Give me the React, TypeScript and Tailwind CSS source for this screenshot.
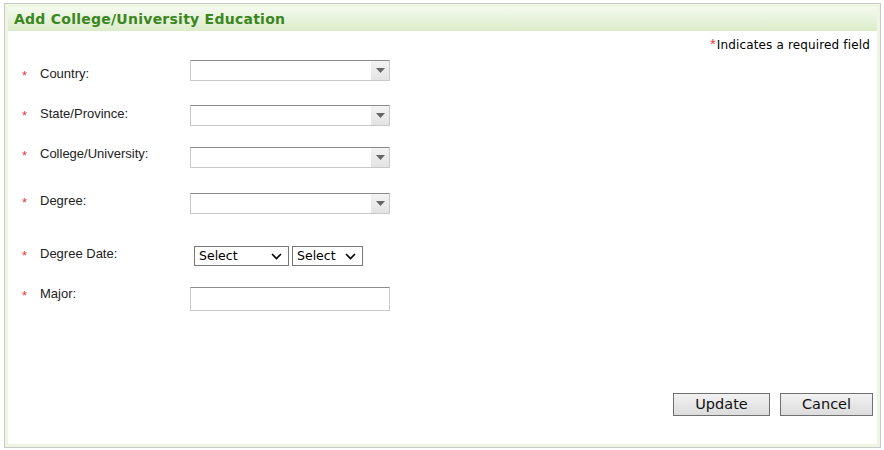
import React from "react";

const Star = () => (
  <span className="w-[18px] ml-[14px] text-[#e8383d] text-[13px] leading-none font-['Liberation_Sans',sans-serif] pt-[3px]">*</span>
);

const Combo = () => (
  <div className="flex w-[200px] h-[21px] border border-[#c9c9c9] border-t-[#8c8c8c] bg-white">
    <div className="flex-1" />
    <div className="w-[18px] h-full bg-gradient-to-b from-[#f3f3f3] to-[#e3e3e3] flex items-center justify-center">
      <svg width="9" height="5" viewBox="0 0 9 5"><path d="M0 0H9L4.5 5Z" fill="#666" /></svg>
    </div>
  </div>
);

const SmallSelect = ({ w }: { w: string }) => (
  <div className={`flex items-center ${w} h-[20px] border border-[#767676] bg-white pl-[4px] pr-[6px] font-['DejaVu_Sans',sans-serif] text-[12.5px] text-black`}>
    <span className="flex-1 leading-none">Select</span>
    <svg width="11" height="7" viewBox="0 0 11 7"><path d="M1 1L5.5 5.5L10 1" stroke="#000" strokeWidth="1.6" fill="none" /></svg>
  </div>
);

type RowProps = { label: string; h: string; lt: string; children: React.ReactNode; bt?: string };
const Row = ({ label, h, lt, children, bt = "mt-[5px]" }: RowProps) => (
  <div className={`flex items-start ${h}`}>
    <div className={`flex items-start w-[182px] ${lt}`}>
      <Star />
      <span className="text-[13px] leading-[16px] text-[#222] font-['Liberation_Sans',sans-serif]">{label}</span>
    </div>
    <div className={bt}>{children}</div>
  </div>
);

export default function App() {
  return (
    <div className="w-[884px] h-[450px] bg-white pt-[3px] pl-[4px]">
      <div className="w-[877px] h-[445px] border border-[#c9c9c9] flex flex-col">
        <div className="flex-1 border-[3px] border-[#eef5e3] flex flex-col">
          <div className="h-[24px] bg-gradient-to-b from-[#f4f9ee] to-[#dbecc9] pl-[6px] flex items-center">
            <span className="font-['DejaVu_Sans',sans-serif] font-bold text-[14px] text-[#3a861f] tracking-[0.25px]">Add College/University Education</span>
          </div>
          <div className="flex justify-end pr-[7px] mt-[3px] h-[21px] items-center">
            <span className="text-[#e8383d] text-[15px] font-['Liberation_Sans',sans-serif] leading-none -mt-[3px] mr-[1px]">*</span>
            <span className="font-['DejaVu_Sans',sans-serif] text-[12px] text-black tracking-[0.15px]">Indicates a required field</span>
          </div>
          <Row label="Country:" h="h-[45px]" lt="mt-[11px]"><Combo /></Row>
          <Row label="State/Province:" h="h-[42px]" lt="mt-[6px]"><Combo /></Row>
          <Row label="College/University:" h="h-[46px]" lt="mt-[4px]"><Combo /></Row>
          <Row label="Degree:" h="h-[53px]" lt="mt-[5px]"><Combo /></Row>
          <Row label="Degree Date:" h="h-[41px]" lt="mt-[5px]" bt="mt-[5px] ml-[4px]">
            <div className="flex gap-[3px]">
              <SmallSelect w="w-[95px]" />
              <SmallSelect w="w-[71px]" />
            </div>
          </Row>
          <Row label="Major:" h="h-[40px]" lt="mt-[4px]">
            <div className="w-[200px] h-[24px] border border-[#c9c9c9] border-t-[#8c8c8c] bg-white" />
          </Row>
          <div className="flex justify-end gap-[10px] pr-[4px] mt-[71px]">
            <button className="w-[97px] h-[23px] border border-[#707070] bg-gradient-to-b from-[#f2f2f2] to-[#dcdcdc] font-['DejaVu_Sans',sans-serif] text-[14.5px] text-[#111] leading-none">Update</button>
            <button className="w-[93px] h-[23px] border border-[#707070] bg-gradient-to-b from-[#f2f2f2] to-[#dcdcdc] font-['DejaVu_Sans',sans-serif] text-[14.5px] text-[#111] leading-none">Cancel</button>
          </div>
        </div>
      </div>
    </div>
  );
}
